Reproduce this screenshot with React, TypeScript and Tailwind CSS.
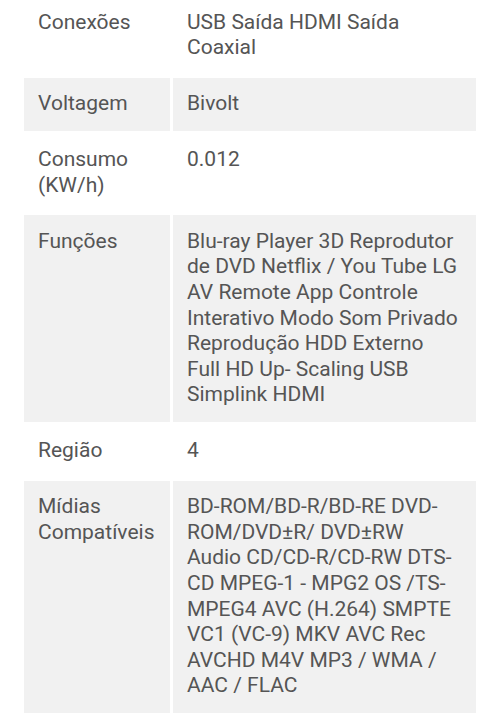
const specs = [
  { label: "Conexões", value: "USB Saída HDMI Saída Coaxial" },
  { label: "Voltagem", value: "Bivolt" },
  { label: "Consumo (KW/h)", value: "0.012" },
  {
    label: "Funções",
    value:
      "Blu-ray Player 3D Reprodutor de DVD Netflix / You Tube LG AV Remote App Controle Interativo Modo Som Privado Reprodução HDD Externo Full HD Up- Scaling USB Simplink HDMI",
  },
  { label: "Região", value: "4" },
  {
    label: "Mídias Compatíveis",
    value:
      "BD-ROM/BD-R/BD-RE DVD-ROM/DVD±R/ DVD±RW Audio CD/CD-R/CD-RW DTS-CD MPEG-1 - MPG2 OS /TS-MPEG4 AVC (H.264) SMPTE VC1 (VC-9) MKV AVC Rec AVCHD M4V MP3 / WMA / AAC / FLAC",
  },
];

export default function App() {
  return (
    <div className="min-h-[719px] bg-white overflow-hidden font-['Roboto','Liberation_Sans',sans-serif] text-[21px] leading-[25.6px] text-[#555555]">
      <div className="mx-[24px] -mt-[4px] grid grid-cols-[146px_1fr] gap-x-[3px] gap-y-[3px]">
        {specs.map((row, i) => {
          const bg = i % 2 === 1 ? "bg-[#f1f1f1]" : "bg-white";
          return (
            <div key={row.label} className="contents">
              <div className={`${bg} pl-[14px] pr-[4px] py-[13.7px]`}>
                {row.label}
              </div>
              <div className={`${bg} pl-[14px] pr-[16px] py-[13.7px]`}>
                {row.value}
              </div>
            </div>
          );
        })}
      </div>
    </div>
  );
}
